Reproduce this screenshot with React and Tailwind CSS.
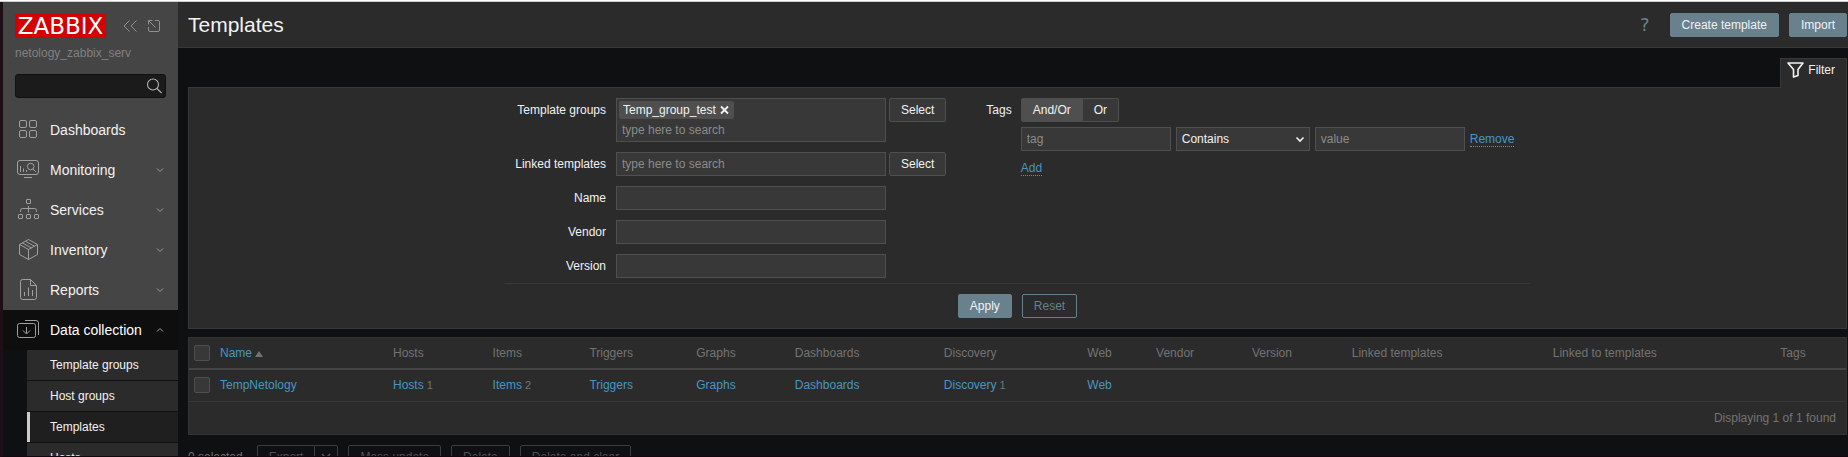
import React from "react";

const field =
  "block h-6 border border-[#4f4f4f] bg-[#383838] px-[5px] text-xs text-[#f2f2f2] placeholder:text-[#8b8b8b] outline-none";
const greyButton =
  "h-6 rounded-[2px] border border-[#4f4f4f] bg-[#383838] px-[11px] text-xs text-[#f2f2f2]";
const primaryButton =
  "h-6 rounded-[2px] border border-[#69808d] bg-[#69808d] px-[11px] text-xs text-[#f2f2f2]";
const disabledButton =
  "h-6 rounded-[2px] border border-[#3d3d3d] px-[11px] text-xs text-[#525252]";

function Icon({ children, className = "size-6" }) {
  return (
    <svg viewBox="0 0 24 24" className={className} fill="none" stroke="currentColor" aria-hidden="true">
      {children}
    </svg>
  );
}

const icons = {
  dashboards: (
    <Icon>
      <rect x="3.5" y="2.5" width="7" height="7" rx="1.5" />
      <rect x="13.5" y="2.5" width="7" height="7" rx="1.5" />
      <rect x="3.5" y="12.5" width="7" height="7" rx="1.5" />
      <rect x="13.5" y="12.5" width="7" height="7" rx="1.5" />
    </Icon>
  ),
  monitoring: (
    <Icon>
      <rect x="1.5" y="2.5" width="21" height="14" rx="2.5" />
      <path d="M8 19.5h8M4.5 8v6M7.5 10.5V14M10.5 12v2M17 11l3 3" />
      <circle cx="14.7" cy="8.5" r="3.3" />
    </Icon>
  ),
  services: (
    <Icon>
      <rect x="10.5" y="1.5" width="4" height="4" rx="0.5" />
      <rect x="2.5" y="16.5" width="4" height="4" rx="0.5" />
      <rect x="10.5" y="16.5" width="4" height="4" rx="0.5" />
      <rect x="18.5" y="16.5" width="4" height="4" rx="0.5" />
      <path d="M12.5 8v6.5M4.5 14v-1.5a2 2 0 0 1 2-2h12a2 2 0 0 1 2 2V14" />
    </Icon>
  ),
  inventory: (
    <Icon>
      <path d="M12.5 1.5l9 5v10l-9 5-9-5v-10zM3.5 6.5l9 5 9-5M12.5 11.5v10M6.5 5l9 5M9.5 3.3l9 5" />
    </Icon>
  ),
  reports: (
    <Icon>
      <path d="M14.5 1.5h-8a2 2 0 0 0-2 2v16a2 2 0 0 0 2 2h12a2 2 0 0 0 2-2v-12zM14.5 1.5v6h6M8.5 14v4M12.5 9.5V18M16.5 12v6" />
    </Icon>
  ),
  data: (
    <Icon>
      <rect x="1.5" y="5.5" width="18" height="14" rx="2" />
      <path d="M9 2.5h11a2.5 2.5 0 0 1 2.5 2.5v12M10.5 9v6.5M7 12.5l3.5 3.5 3.5-3.5" />
    </Icon>
  ),
};

const menu = [
  { label: "Dashboards", icon: "dashboards" },
  { label: "Monitoring", icon: "monitoring", sub: true },
  { label: "Services", icon: "services", sub: true },
  { label: "Inventory", icon: "inventory", sub: true },
  { label: "Reports", icon: "reports", sub: true },
];

function Chevron({ up }) {
  return (
    <svg viewBox="0 0 8 8" className="ml-auto size-2 text-[#a0a0a0]" fill="none" stroke="currentColor" aria-hidden="true">
      <path d={up ? "M1 5.5l3-3 3 3" : "M1 2.5l3 3 3-3"} />
    </svg>
  );
}

function Sidebar() {
  return (
    <aside className="flex w-[175px] shrink-0 flex-col bg-[#454545]">
      <div className="flex shrink-0 items-center px-3 pt-3">
        <a href="#" className="flex h-6 w-[91px] items-center justify-center bg-[#d40000] font-['DejaVu_Sans',sans-serif] text-[23px] leading-6 text-white">
          ZABBIX
        </a>
        <button aria-label="Collapse sidebar" className="ml-4 text-[#8f8f8f]">
          <svg viewBox="0 0 16 16" className="size-4" fill="none" stroke="currentColor">
            <path d="M7.5 2.5L2 8l5.500 5.500M14.500 2.500L9 8l5.500 5.500" />
          </svg>
        </button>
        <button aria-label="Hide sidebar" className="ml-2 text-[#8f8f8f]">
          <svg viewBox="0 0 16 16" className="size-4" fill="none" stroke="currentColor">
            <path d="M2.500 9v3a1.500 1.500 0 0 0 1.500 1.500h8a1.500 1.500 0 0 0 1.500-1.500V4a1.500 1.500 0 0 0-1.500-1.500H9M2.500 6.500v-4h4M2.500 2.500l7 7" />
          </svg>
        </button>
      </div>
      <div className="mt-1.5 shrink-0 px-3 text-xs leading-[18px] text-[#808080]">netology_zabbix_serv</div>
      <form className="mx-3 my-3 flex h-6 shrink-0 items-center rounded-[3px] border border-[#0c1215] bg-[#1b1b1b] pr-[3px]">
        <input aria-label="Search" className="min-w-0 flex-1 bg-transparent px-1 text-xs text-white outline-none" />
        <button type="button" aria-label="Search" className="text-[#b4b4b4]">
          <svg viewBox="0 0 16 16" className="size-4" fill="none" stroke="currentColor" strokeWidth="1.1">
            <circle cx="7" cy="6.500" r="5.500" />
            <path d="M11 10.500l4.500 4.500" />
          </svg>
        </button>
      </form>
      <nav className="flex flex-1 flex-col text-sm text-[#f2f2f2]">
        {menu.map((m) => (
          <a key={m.label} href="#" className="flex h-10 shrink-0 items-center pl-[13px] pr-[14px]">
            <span className="mr-[10px] text-[#a0a0a0]">{icons[m.icon]}</span>
            {m.label}
            {m.sub && <Chevron />}
          </a>
        ))}
        <div className="flex-1 bg-[#0e1012]">
          <a href="#" className="flex h-10 items-center bg-[#0e0e0e] pl-[13px] pr-[14px] text-white">
            <span className="mr-[10px] text-[#a0a0a0]">{icons.data}</span>
            Data collection
            <Chevron up />
          </a>
          <div className="flex flex-col gap-px pl-6 text-xs">
            {["Template groups", "Host groups", "Templates", "Hosts"].map((s) => (
              <a
                key={s}
                href="#"
                className={
                  "flex h-[30px] items-center border-l-[3px] pl-5 " +
                  (s === "Templates" ? "border-[#cccccc] bg-[#1f1f1f]" : "border-[#2b2b2b] bg-[#2b2b2b]")
                }
              >
                {s}
              </a>
            ))}
          </div>
        </div>
      </nav>
    </aside>
  );
}

function Row({ id, label, children }) {
  return (
    <div className="flex items-start">
      <label htmlFor={id} className="mr-[10px] w-[101px] text-right leading-6">
        {label}
      </label>
      {children}
    </div>
  );
}

function Filter() {
  return (
    <section className="border border-[#383838] bg-[#2b2b2b] px-[10px] py-[10px] text-[#f2f2f2]">
      <div className="mx-auto flex max-w-[1025px] border-b border-[#383838] pb-[5px]">
        <div className="flex flex-col gap-[10px]">
          <Row id="groups" label="Template groups">
            <div className="w-[270px] border border-[#4f4f4f] bg-[#383838] pt-0.5">
              <span className="ml-0.5 flex h-[18px] w-max items-center gap-1 rounded-[2px] bg-[#4f4f4f] px-1">
                Temp_group_test
                <button aria-label="Remove Temp_group_test">
                  <svg viewBox="0 0 10 10" className="size-[10px]" fill="none" stroke="currentColor" strokeWidth="1.8">
                    <path d="M1 1.500l7 7M8 1.500l-7 7" />
                  </svg>
                </button>
              </span>
              <input id="groups" placeholder="type here to search" className="block h-[22px] w-full bg-transparent px-[5px] text-xs placeholder:text-[#8b8b8b] outline-none" />
            </div>
            <button className={greyButton + " ml-[3px]"}>Select</button>
          </Row>
          <Row id="linked" label="Linked templates">
            <input id="linked" placeholder="type here to search" className={field + " w-[270px]"} />
            <button className={greyButton + " ml-[3px]"}>Select</button>
          </Row>
          <Row id="name" label="Name">
            <input id="name" className={field + " w-[270px]"} />
          </Row>
          <Row id="vendor" label="Vendor">
            <input id="vendor" className={field + " w-[270px]"} />
          </Row>
          <Row id="version" label="Version">
            <input id="version" className={field + " w-[270px]"} />
          </Row>
        </div>
        <div className="ml-10 flex items-start" role="group" aria-labelledby="tags-label">
          <span id="tags-label" className="mr-[9px] leading-6">Tags</span>
          <div>
            <div className="flex">
              <button aria-pressed="true" className="h-6 rounded-l-[2px] border border-[#4f4f4f] bg-[#4f4f4f] px-[11px]">And/Or</button>
              <button aria-pressed="false" className="h-6 rounded-r-[2px] border border-l-0 border-[#4f4f4f] bg-[#383838] px-[11px]">Or</button>
            </div>
            <div className="mt-[5px] flex items-center gap-[5px]">
              <input aria-label="tag" placeholder="tag" className={field + " w-[150px]"} />
              <div className="relative">
                <select aria-label="Operator" defaultValue="Contains" className="block h-6 w-[134px] appearance-none border border-[#4f4f4f] bg-[#383838] pl-[5px] text-xs outline-none">
                  <option>Contains</option>
                  <option>Exists</option>
                  <option>Equals</option>
                </select>
                <svg viewBox="0 0 10 10" className="pointer-events-none absolute top-[7px] right-[5px] size-[10px]" fill="none" stroke="currentColor" strokeWidth="1.6" aria-hidden="true">
                  <path d="M1.500 3.500L5 7l3.500-3.500" />
                </svg>
              </div>
              <input aria-label="value" placeholder="value" className={field + " w-[150px]"} />
              <button className="border-b border-dotted border-[#4796c4] text-xs leading-[14px] text-[#4796c4]">Remove</button>
            </div>
            <button className="mt-[10px] border-b border-dotted border-[#4796c4] text-xs leading-[14px] text-[#4796c4]">Add</button>
          </div>
        </div>
      </div>
      <div className="mt-[10px] flex justify-center gap-[10px]">
        <button className={primaryButton}>Apply</button>
        <button className="h-6 rounded-[2px] border border-[#69808d] px-[11px] text-xs text-[#69808d]">Reset</button>
      </div>
    </section>
  );
}

const columns = ["Hosts", "Items", "Triggers", "Graphs", "Dashboards", "Discovery", "Web", "Vendor", "Version", "Linked templates", "Linked to templates", "Tags"];
const cells = [["Hosts", 1], ["Items", 2], ["Triggers"], ["Graphs"], ["Dashboards"], ["Discovery", 1], ["Web"], null, null, null, null, null];
const checkbox = "block size-4 appearance-none rounded-[2px] border border-[#4f4f4f] bg-[#383838]";

function Templates() {
  return (
    <div className="mt-2 border border-[#333333] bg-[#2b2b2b]">
      <table className="w-full border-collapse text-left whitespace-nowrap">
        <thead>
          <tr className="h-[31px] border-b-2 border-[#454545] text-[#737373]">
            <th className="w-[26px] pl-[5px]">
              <input type="checkbox" aria-label="Select all" className={checkbox} />
            </th>
            <th className="px-[5px] font-normal">
              <a href="#" className="text-[#4796c4]">
                Name
                <svg viewBox="0 0 8 6" className="ml-[3px] inline h-1.5 w-2 align-baseline" aria-hidden="true">
                  <path d="M4 0l4 6H0z" fill="#737373" />
                </svg>
              </a>
            </th>
            {columns.map((c) => (
              <th key={c} className="px-[5px] font-normal">{c}</th>
            ))}
          </tr>
        </thead>
        <tbody>
          <tr className="h-8 border-b border-[#383838]">
            <td className="pl-[5px]">
              <input type="checkbox" aria-label="TempNetology" className={checkbox} />
            </td>
            <td className="px-[5px]">
              <a href="#" className="text-[#4796c4]">TempNetology</a>
            </td>
            {cells.map((c, i) => (
              <td key={columns[i]} className="px-[5px]">
                {c && <a href="#" className="text-[#4796c4]">{c[0]}</a>}
                {c && c[1] && <span className="text-[11px] text-[#737373]"> {c[1]}</span>}
              </td>
            ))}
          </tr>
        </tbody>
      </table>
      <div className="pr-[10px] text-right leading-8 text-[#737373]">Displaying 1 of 1 found</div>
    </div>
  );
}

export default function App() {
  return (
    <div className="flex h-screen flex-col overflow-hidden bg-[#0e1012] font-['Liberation_Sans',Arial,sans-serif] text-xs">
      <div className="h-0.5 shrink-0 border-b border-[#cfcfcf] bg-white" />
      <div className="flex min-h-0 flex-1 overflow-hidden border-b border-l-[3px] border-b-[#14060f] border-l-[#1d0f18]">
        <Sidebar />
        <main className="min-w-0 flex-1">
          <header className="flex h-[46px] items-center border-b border-[#383838] bg-[#2b2b2b] pr-px pl-[10px]">
            <h1 className="text-[21px] text-[#f2f2f2]">Templates</h1>
            <a href="#" aria-label="Help" className="mr-5 ml-auto font-['DejaVu_Sans',sans-serif] text-lg text-[#69808d]">?</a>
            <button className={primaryButton}>Create template</button>
            <button className={primaryButton + " ml-[10px]"}>Import</button>
          </header>
          <div className="pt-[10px] pr-px pl-[10px]">
            <div className="flex justify-end">
              <a href="#" className="relative z-10 -mb-px flex h-[30px] items-start gap-1 border border-b-0 border-[#383838] bg-[#2b2b2b] pt-[3px] pr-[11px] pl-1.5 leading-4 text-[#f2f2f2]">
                <svg viewBox="0 0 17 16" className="h-4 w-[17px]" fill="none" stroke="currentColor" strokeWidth="1.6" strokeLinejoin="round" aria-hidden="true">
                  <path d="M1 1h15l-5 6.500v6L6.500 15V7.500z" />
                </svg>
                <span>Filter</span>
              </a>
            </div>
            <Filter />
            <Templates />
            <div className="mt-[10px] flex items-center text-[#737373]">
              <span className="mr-[14px]">0 selected</span>
              <button className={disabledButton + " rounded-r-none border-r-0"}>Export</button>
              <button aria-label="Export options" className="flex h-6 w-6 items-center justify-center rounded-r-[2px] border border-[#3d3d3d] text-[#525252]">
                <svg viewBox="0 0 10 10" className="size-[10px]" fill="none" stroke="currentColor" strokeWidth="1.600">
                  <path d="M1 2l4 4 4-4" />
                </svg>
              </button>
              <button className={disabledButton + " ml-[10px]"}>Mass update</button>
              <button className={disabledButton + " ml-[10px]"}>Delete</button>
              <button className={disabledButton + " ml-[10px]"}>Delete and clear</button>
            </div>
          </div>
        </main>
      </div>
    </div>
  );
}
